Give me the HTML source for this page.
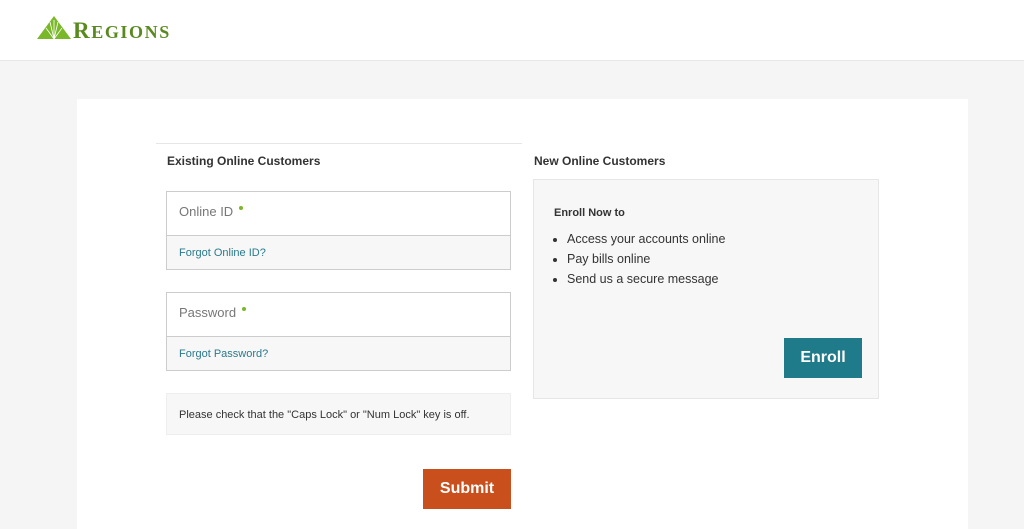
<!DOCTYPE html>
<html><head><style>
body{margin:0;width:1024px;height:517px;overflow:hidden;background:#f5f5f5;font-family:"Liberation Sans",sans-serif;color:#333;position:relative}
.hdr{position:absolute;left:0;top:0;width:1024px;height:60px;background:#fff;border-bottom:1px solid #e8e8e8}
.card{position:absolute;left:77px;top:99px;width:891px;height:430px;background:#fff}
.a{position:absolute}
h3{margin:0;font-size:12px;font-weight:bold;color:#333}
.box{position:absolute;border:1px solid #ccc;background:#f7f7f7}
.inp{background:#fff;height:43px;border-bottom:1px solid #ccc;font-size:13px;color:#777;padding-left:12px;line-height:40px}
.dot{display:inline-block;width:4px;height:4px;border-radius:50%;background:#7ab829;vertical-align:top;margin:14px 0 0 6px}
.lk{font-size:11px;color:#2a7a8c;padding-left:12px;line-height:34px}
</style></head><body>
<div class="hdr">
<svg class="a" style="left:37px;top:16px" width="34" height="24" viewBox="0 0 34 24"><polygon points="17,0 34,23 0,23" fill="#7ab829"/><path d="M17 23 L13 6 M17 23 L17 4 M17 23 L21 6 M17 23 L9 12 M17 23 L25 12" stroke="#fff" stroke-width="0.8"/></svg>
<div class="a" style="left:73px;top:18px;font-family:'Liberation Serif',serif;font-weight:bold;color:#5a8a1f;font-size:23px;letter-spacing:1.6px">R<span style="font-size:18px">EGIONS</span></div>
</div>
<div class="card"></div>
<div class="a" style="left:156px;top:143px;width:366px;border-top:1px solid #e6e6e6"></div>
<h3 class="a" style="left:167px;top:154px">Existing Online Customers</h3>
<h3 class="a" style="left:534px;top:154px">New Online Customers</h3>
<div class="box" style="left:166px;top:191px;width:343px;height:77px"><div class="inp">Online ID<span class="dot"></span></div><div class="lk">Forgot Online ID?</div></div>
<div class="box" style="left:166px;top:292px;width:343px;height:77px"><div class="inp">Password<span class="dot"></span></div><div class="lk">Forgot Password?</div></div>
<div class="box" style="left:166px;top:393px;width:343px;height:42px;border-color:#eee;font-size:11px;line-height:42px;padding-left:12px;box-sizing:border-box;width:345px">Please check that the "Caps Lock" or "Num Lock" key is off.</div>
<div class="a" style="left:423px;top:469px;width:88px;height:40px;background:#c9501d;color:#fff;font-weight:bold;font-size:16px;text-align:center;line-height:40px">Submit</div>
<div class="box" style="left:533px;top:179px;width:344px;height:218px;border-color:#e6e6e6">
<div class="a" style="left:20px;top:27px;font-size:11px;font-weight:bold">Enroll Now to</div>
<ul class="a" style="left:0;top:49px;margin:0;padding-left:33px;font-size:12.5px;line-height:20px"><li>Access your accounts online</li><li>Pay bills online</li><li>Send us a secure message</li></ul>
<div class="a" style="left:250px;top:158px;width:78px;height:40px;background:#1f7a8a;color:#fff;font-weight:bold;font-size:16px;text-align:center;line-height:40px">Enroll</div>
</div>
</body></html>
